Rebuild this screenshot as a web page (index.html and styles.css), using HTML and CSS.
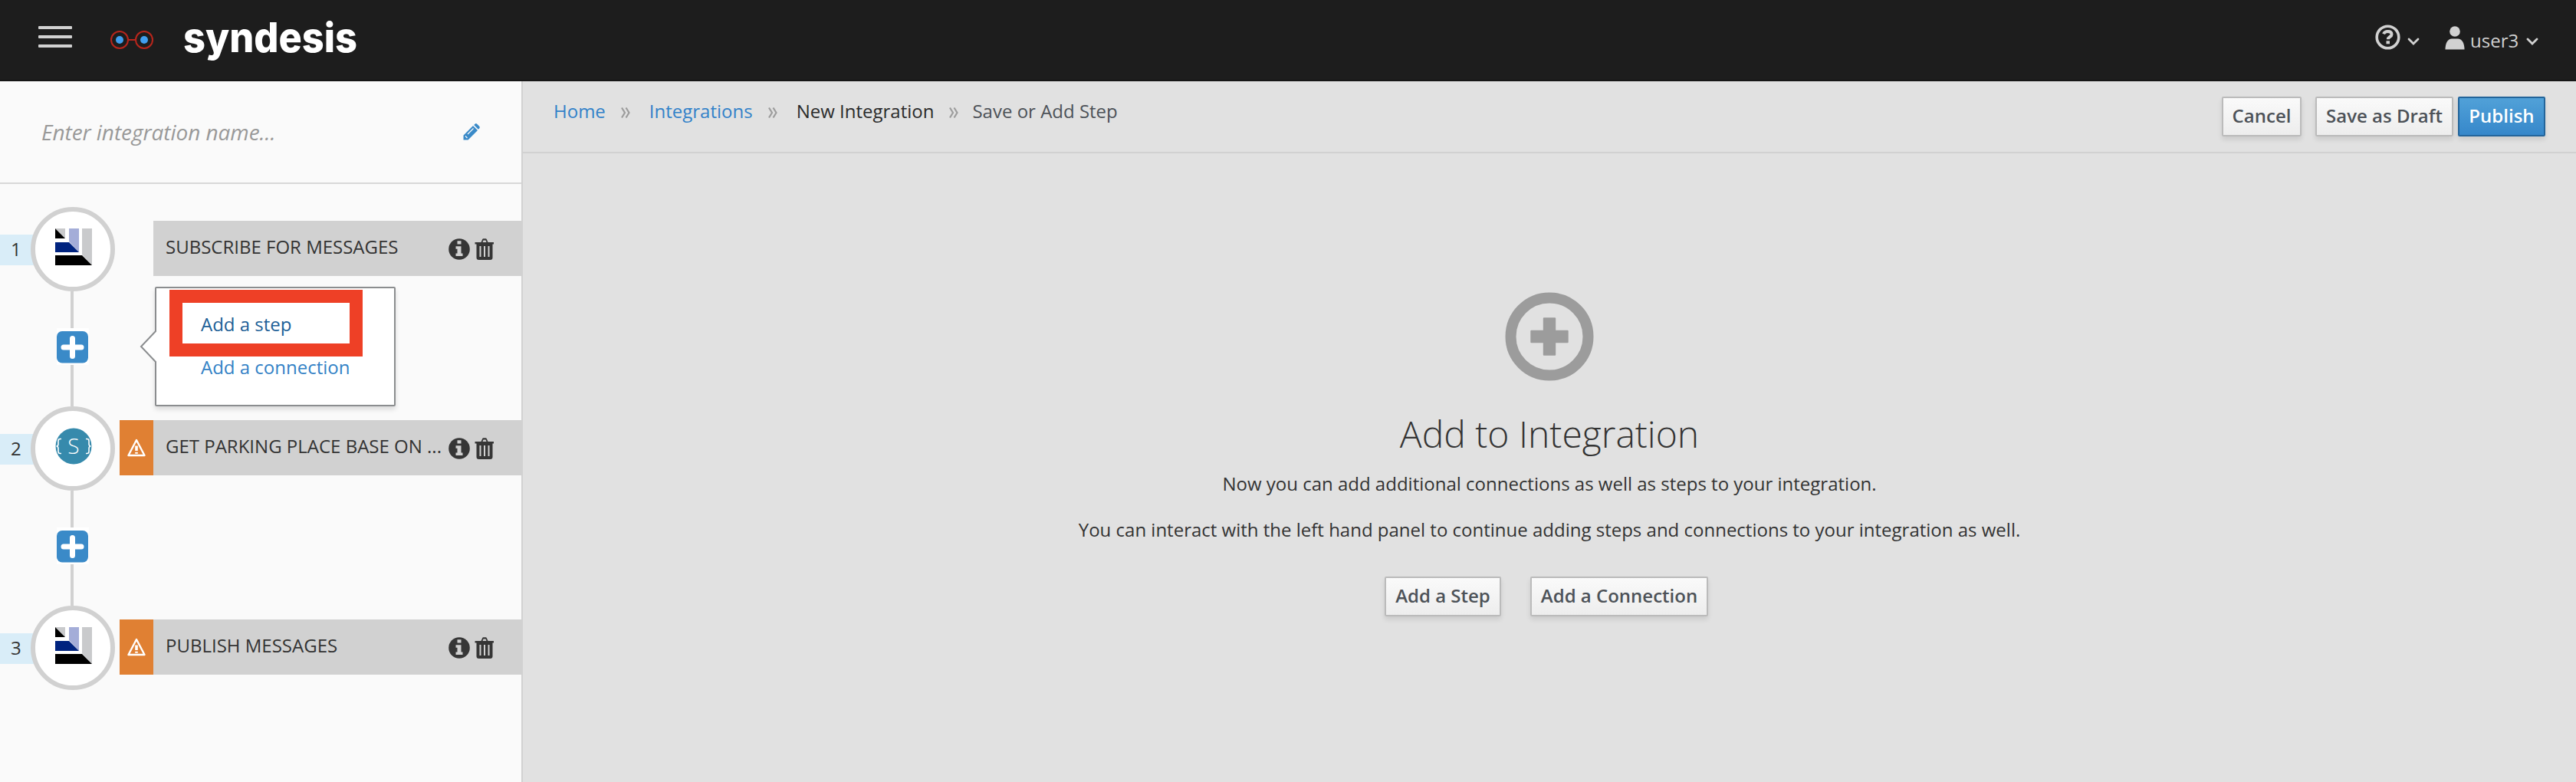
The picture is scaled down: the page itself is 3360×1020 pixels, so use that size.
FILE: index.html
```html
<!DOCTYPE html>
<html lang="en">
<head>
<meta charset="utf-8">
<title>Syndesis</title>
<link rel="stylesheet" href="styles.css">
</head>
<body>
<svg class="defs" aria-hidden="true">
  <symbol id="info" viewBox="0 0 28 28"><circle cx="14" cy="14" r="13.8"/><path fill="#d1d1d1" d="M11.5 3.2h5v4.3h-5zM9.5 10.3h7v9.2h2V23h-9v-3.5h2v-5.7h-2z"/></symbol>
  <symbol id="trash" viewBox="0 0 26 28"><path fill-rule="evenodd" d="M8.5 5 10 1.5C10.300.600 11 .2 12 .2h2c1 0 1.700.4 2 1.300L17.500 5H25v2.500h-1.500V25c0 2-1 3-3 3h-15c-2 0-3-1-3-3V7.500H.5V5zm2 0h5l-1-2.600h-3zM6.500 10v14h2V10zm5.500 0v14h2V10zm5.500 0v14h2V10z"/></symbol>
  <symbol id="warn" viewBox="0 0 24 24"><path d="M12 2 22.500 22h-21z" fill="none" stroke="#fff" stroke-width="2.400" stroke-linejoin="round"/><path fill="#fff" d="M10.200 9.500h3.600v6.500h-3.600zM10.200 17.700h3.600v2h-3.600z"/></symbol>
  <symbol id="amq" viewBox="0 0 48 48"><path fill="#c9cacc" d="M0 0h13v13zM35 0h13v48L35 34z"/><path d="M0 0 13 13H0zM0 35h35l13 13H0z"/><path fill="#a4add8" d="M18 0h13v31L18 17z"/><path fill="#00237f" d="M0 18h18l13 13H0z"/></symbol>
  <symbol id="chev" viewBox="0 0 16 10"><path d="m2 2 6 6 6-6" fill="none" stroke="#d1d1d1" stroke-width="2.800" stroke-linecap="round"/></symbol>
  <symbol id="plus" viewBox="0 0 42 42"><rect width="41" height="41.500" rx="7" fill="#3a8ac8"/><path d="M20.500 9.500v23M9 21h23" stroke="#fff" stroke-width="7" stroke-linecap="round"/></symbol>
</svg>

<header class="masthead">
  <div class="menu"><i></i><i></i><i></i></div>
  <svg class="glasses" width="56" height="26" viewBox="0 0 56 26"><g fill="none" stroke="#b8261c" stroke-width="2"><circle cx="12" cy="13" r="11"/><circle cx="44" cy="13" r="11"/><path d="M23 13h10"/></g><g fill="#419ff0"><circle cx="12" cy="13" r="5"/><circle cx="44" cy="13" r="5"/></g></svg>
  <svg class="wordmark" width="240" height="80" viewBox="0 0 240 80"><text x="-1" y="52" textLength="227" lengthAdjust="spacingAndGlyphs">syndesis</text></svg>
  <nav class="tools">
    <svg width="33" height="33" viewBox="0 0 33 33"><circle cx="16.500" cy="16.500" r="14.300" fill="none" stroke="#d1d1d1" stroke-width="3.600"/><path d="M11 12.300c1-2.300 3-3.300 5.500-3.300 3 0 5 1.400 5 3.900 0 3.200-4.600 3-4.600 6.300" fill="none" stroke="#d1d1d1" stroke-width="4"/><path fill="#d1d1d1" d="M14.500 21.300h4.500v4h-4.500z"/></svg>
    <svg class="chev c1" width="16" height="10"><use href="#chev"/></svg>
    <svg class="person" width="26" height="31" viewBox="0 0 26 31" fill="#d1d1d1"><circle cx="13" cy="7" r="6.800"/><path d="M.5 30.500C.5 22 4 16.500 9 16.500h8c5 0 8.500 5.500 8.500 14z"/></svg>
    <span class="user">user3</span>
    <svg class="chev c2" width="16" height="10"><use href="#chev"/></svg>
  </nav>
</header>

<div class="body">
  <aside class="sidebar">
    <div class="name">
      <span>Enter integration name...</span>
      <svg width="22" height="22" viewBox="0 0 22 22"><path fill="#3a8ac8" d="m13 3 6 6L6.500 21.500H.5V15.500zM14.200 1.900 15.500.700c.9-.8 1.900-.8 2.700 0l3 3c.8.8.8 1.800 0 2.700l-1.300 1.300z"/><path d="m6 14 7.500-7.500M3 16.500l2.500 2.500" stroke="#fafafa" stroke-width="1.300"/></svg>
    </div>
    <div class="steps">
      <section class="step">
        <div class="num">1</div>
        <div class="ring"><svg width="48" height="48"><use href="#amq"/></svg></div>
        <div class="flag none"></div>
        <div class="bar"><span>SUBSCRIBE FOR MESSAGES</span><svg width="28" height="28"><use href="#info"/></svg><svg class="bin" width="26" height="28"><use href="#trash"/></svg></div>
      </section>
      <div class="link"><div class="add"><svg width="42" height="42"><use href="#plus"/></svg></div>
        <div class="popover">
          <svg class="arrow" width="22" height="44" viewBox="0 0 22 44"><path d="M22 1 2 22l20 21" fill="#fff" stroke="#8b8d8f" stroke-width="2"/></svg>
          <a class="active">Add a step</a>
          <a>Add a connection</a>
          <div class="highlight"></div>
        </div>
      </div>
      <section class="step">
        <div class="num">2</div>
        <div class="ring"><svg width="48" height="48" viewBox="0 0 48 48"><circle cx="24" cy="24" r="23.500" fill="#368aac"/><g fill="none" stroke="#fff" stroke-width="1.600"><path d="M8 14.500H6.500C4.500 14.500 4 15.500 4 17v4c0 2-.8 3-2.500 3C3.200 24 4 25 4 27v4c0 1.500.5 2.500 2.500 2.500H8M40 14.500h1.500c2 0 2.500 1 2.500 2.500v4c0 2 .8 3 2.500 3C44.800 24 44 25 44 27v4c0 1.500-.5 2.500-2.500 2.500H40"/></g><text class="s" x="24" y="33.500" text-anchor="middle">S</text></svg></div>
        <div class="flag"><svg width="24" height="24"><use href="#warn"/></svg></div>
        <div class="bar"><span>GET PARKING PLACE BASE ON ...</span><svg width="28" height="28"><use href="#info"/></svg><svg class="bin" width="26" height="28"><use href="#trash"/></svg></div>
      </section>
      <div class="link"><div class="add"><svg width="42" height="42"><use href="#plus"/></svg></div></div>
      <section class="step">
        <div class="num">3</div>
        <div class="ring"><svg width="48" height="48"><use href="#amq"/></svg></div>
        <div class="flag"><svg width="24" height="24"><use href="#warn"/></svg></div>
        <div class="bar"><span>PUBLISH MESSAGES</span><svg width="28" height="28"><use href="#info"/></svg><svg class="bin" width="26" height="28"><use href="#trash"/></svg></div>
      </section>
    </div>
  </aside>

  <main class="main">
    <div class="toolbar">
      <nav class="crumbs">
        <a>Home</a><svg class="sep" width="14" height="16" viewBox="0 0 14 16"><path d="m2 1.500 4 6.500-4 6.500m5.500-13 4 6.500-4 6.500"/></svg>
        <a>Integrations</a><svg class="sep" width="14" height="16" viewBox="0 0 14 16"><path d="m2 1.500 4 6.500-4 6.500m5.500-13 4 6.500-4 6.500"/></svg>
        <span class="cur">New Integration</span><svg class="sep last" width="14" height="16" viewBox="0 0 14 16"><path d="m2 1.500 4 6.500-4 6.500m5.500-13 4 6.500-4 6.500"/></svg>
        <span>Save or Add Step</span>
      </nav>
      <div class="actions">
        <button class="btn cancel">Cancel</button>
        <button class="btn draft">Save as Draft</button>
        <button class="btn primary">Publish</button>
      </div>
    </div>
    <div class="blank">
      <svg width="116" height="116" viewBox="0 0 116 116"><circle cx="58" cy="58" r="50.500" fill="none" stroke="#9c9c9c" stroke-width="14"/><path fill="#9c9c9c" stroke="#9c9c9c" stroke-width="2" stroke-linejoin="round" d="M50.800 34.300h14.400v16.500h16.500v14.400H65.200v16.500H50.800V65.200H34.300V50.800h16.500z"/></svg>
      <h1>Add to Integration</h1>
      <p>Now you can add additional connections as well as steps to your integration.</p>
      <p>You can interact with the left hand panel to continue adding steps and connections to your integration as well.</p>
      <div class="choices">
        <button class="btn addstep">Add a Step</button>
        <button class="btn addconn">Add a Connection</button>
      </div>
    </div>
  </main>
</div>
</body>
</html>
```
FILE: styles.css
```css
* { box-sizing: border-box; }
body { margin: 0; height: 1020px; overflow: hidden; display: flex; flex-direction: column; font: 24px/40px "Open Sans", sans-serif; color: #333; background: #e1e1e1; }
svg { display: block; flex: none; }
.defs { position: absolute; width: 0; height: 0; }

.masthead { height: 106px; flex: none; display: flex; align-items: flex-start; background: #1d1d1d; border-bottom: 2px solid #161616; padding: 0 49px 0 50px; }
.menu { display: flex; flex-direction: column; gap: 8px; padding-top: 34px; width: 44px; }
.menu i { height: 4px; border-radius: 1px; background: #d1d1d1; }
.glasses { margin: 39px 0 0 50px; }
.wordmark { margin: 16px 0 0 40px; overflow: visible; }
.wordmark text { font: 800 54px "Inter", sans-serif; fill: #fff; }
.tools { margin-left: auto; display: flex; align-items: flex-start; color: #d1d1d1; padding-top: 32px; }
.chev { margin-top: 17px; }
.c1 { margin-left: 9px; }
.person { margin: 2px 0 0 33px; }
.user { margin: 1px 0 0 7px; width: 64px; }
.c2 { margin-left: 9px; }

.body { flex: 1; display: flex; min-height: 0; }
.sidebar { width: 682px; flex: none; background: #fafafa; border-right: 2px solid #d1d1d1; }
.name { height: 134px; border-bottom: 2px solid #d8d8d8; display: flex; justify-content: space-between; align-items: center; padding: 0 54px 0 54px; color: #999; font-size: 28px; font-style: italic; letter-spacing: -.05px; }
.steps { padding-top: 30px; }
.step { height: 110px; display: flex; align-items: center; }
.num { width: 60px; height: 40px; margin: 2px -20px 0 0; padding-left: 14px; background: #d9edf8; line-height: 38px; }
.ring { position: relative; width: 110px; height: 110px; flex: none; border: 6px solid #d1d1d1; border-radius: 50%; background: #fff; padding: 22px 0 0 26px; }
.s { font: 300 28px "Open Sans", sans-serif; fill: #fff; }
.flag { width: 44px; height: 72px; margin: -2px 0 0 6px; background: #e08033; display: flex; align-items: center; justify-content: center; }
.flag.none { background: none; }
.bar { flex: 1; height: 72px; margin-top: -2px; background: #d1d1d1; display: flex; align-items: center; padding: 0 35px 0 16px; line-height: 34px; }
.bar span { flex: 1; white-space: nowrap; margin-top: -4px; }
.bar svg { fill: #363636; margin-top: 1px; }
.bar .bin { margin-left: 6px; }
.link { position: relative; height: 150px; padding: 48px 0 0 74px; background: linear-gradient(#d1d1d1, #d1d1d1) 92px 0 / 4px 150px no-repeat; }
.add { width: 42px; height: 48px; padding-top: 4px; background: #fff; }
.popover { position: absolute; left: 202px; top: -6px; width: 314px; height: 156px; background: #fff; border: 2px solid #8b8d8f; border-radius: 2px; box-shadow: 0 4px 6px rgba(0,0,0,.13); padding: 27px 0 0 58px; z-index: 2; }
.popover a { display: block; height: 56px; line-height: 40px; color: #3382c6; }
.popover a.active { color: #205f97; }
.arrow { position: absolute; left: -22px; top: 54px; }
.highlight { position: absolute; left: 17px; top: 2px; width: 252px; height: 87px; border: solid #ee4026; border-width: 17px; }

.main { flex: 1; }
.toolbar { height: 94px; border-bottom: 2px solid #d1d1d1; display: flex; justify-content: space-between; padding: 20px 40px 0 40px; }
.crumbs { display: flex; height: 38px; line-height: 38px; color: #4d5258; align-items: center; }
.crumbs a { color: #3382c9; }
.crumbs .cur { color: #2b2b2b; }
.sep { margin: 4px 24px 0 19px; fill: none; stroke: #9c9c9c; stroke-width: 2.2; }
.sep.last { margin-right: 17px; }
.actions { display: flex; }
.btn { height: 52px; padding: 0 0 2px; border: 2px solid #bbb; border-radius: 2px; background: linear-gradient(#fafafa, #ededed); box-shadow: 0 4px 6px rgba(3,3,3,.1); color: #4d5258; font: 600 24px/40px "Open Sans", sans-serif; white-space: nowrap; }
.cancel { width: 104px; margin-right: 18px; }
.draft { width: 180px; margin-right: 6px; }
.primary { width: 114px; color: #fff; background: linear-gradient(#51a1d8, #3687ca); border-color: #23659b; }
.blank { display: flex; flex-direction: column; align-items: center; padding-top: 181px; }
.blank h1 { margin: 37px 0 0; font-weight: 300; font-size: 48px; line-height: 64px; }
.blank p { margin: 13px 0 0; line-height: 40px; }
.blank p + p { margin-top: 20px; }
.choices { display: flex; gap: 38px; margin: 41px 8px 0 0; }
.addstep { width: 152px; }
.addconn { width: 232px; }
```
